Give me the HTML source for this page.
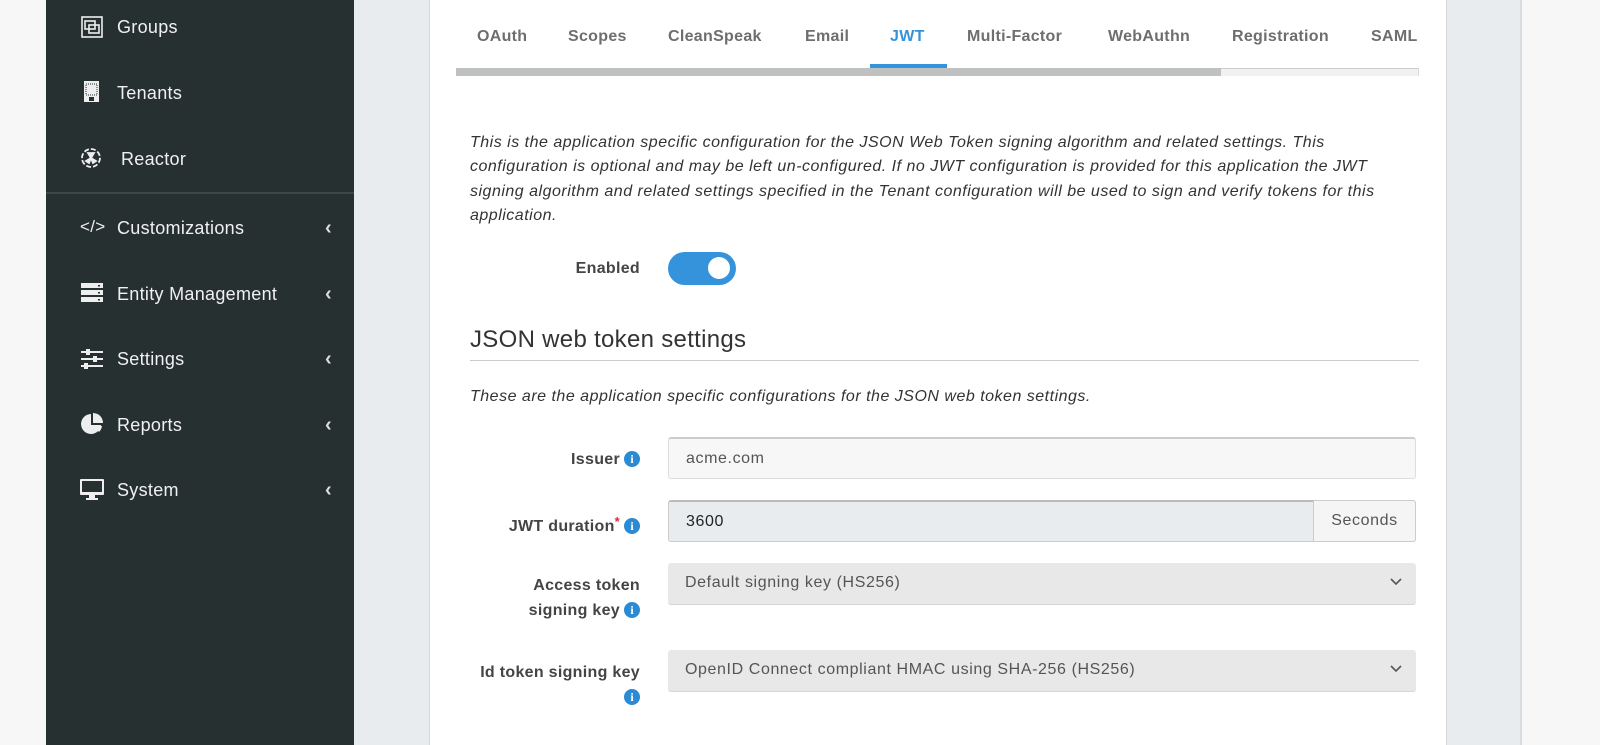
<!DOCTYPE html>
<html><head><style>
*{margin:0;padding:0;box-sizing:border-box}
body{width:1600px;height:745px;overflow:hidden;background:#f7f7f7;font-family:"Liberation Sans",sans-serif;position:relative}
.a{position:absolute}
#side{left:46px;top:0;width:308px;height:745px;background:#263031}
.ni{position:absolute;left:117px;color:#f0f0f0;font-size:18px;letter-spacing:0.3px}
.ic{position:absolute;left:80px;width:24px;height:24px}
.car{position:absolute;left:325px;color:#ddd;font-size:20px;font-weight:bold}
#main{left:354px;top:0;width:1168px;height:745px;background:#e8ecef;border-right:2px solid #d8dde1}
#panel{left:429px;top:0;width:1018px;height:745px;background:#fff;border-left:1px solid #d6dadd;border-right:1px solid #d6dadd}
.tab{position:absolute;top:28px;font-size:16px;font-weight:bold;color:#6e6e6e;letter-spacing:0.3px}
.lbl{position:absolute;font-size:16px;font-weight:bold;color:#444;text-align:right;right:960px;line-height:25px;letter-spacing:0.3px}
.info{display:inline-block;width:16px;height:16px;border-radius:50%;background:#2a8ad4;color:#fff;font-size:12px;font-weight:bold;text-align:center;line-height:16px;font-family:"Liberation Serif",serif;vertical-align:1px;margin-left:4px;letter-spacing:0}
.inp{position:absolute;left:668px;width:748px;height:42px;border-radius:3px;font-size:16px;color:#555;padding-left:17px;line-height:40px;letter-spacing:0.6px}
.chev{position:absolute;right:14px;top:0}
.it{font-size:16px;font-style:italic;color:#333;line-height:24.3px;letter-spacing:0.5px}
</style></head><body>
<div id="side" class="a">
<div class="a" style="left:0;top:192px;width:308px;height:2px;background:#3e4849"></div>
</div>
<svg class="ic" style="top:15px" viewBox="0 0 24 24" fill="none" stroke="#eee" stroke-width="1.6"><rect x="2" y="2" width="20" height="20"/><rect x="5" y="6" width="10" height="8"/><rect x="9" y="10" width="10" height="8"/></svg>
<div class="ni" style="top:17px">Groups</div>
<svg class="ic" style="top:80px" viewBox="0 0 24 24"><rect x="4" y="1" width="15" height="21" fill="#eee"/><g fill="#263031"><rect x="6" y="4" width="11" height="11" fill="none" stroke="#263031" stroke-dasharray="1 1"/><rect x="9" y="17" width="5" height="4"/></g></svg>
<div class="ni" style="top:83px">Tenants</div>
<svg class="ic" style="top:146px" viewBox="0 0 24 24" fill="none" stroke="#eee" stroke-width="1.8"><circle cx="11" cy="12" r="9" stroke-dasharray="5 2"/><path d="M11 12 L8 7 L14 7Z M11 12 L6 15 L9 17Z M11 12 L16 15 L13 17Z" fill="#eee"/></svg>
<div class="ni" style="left:121px;top:149px">Reactor</div>
<div class="ni" style="left:80px;top:217px;font-size:17px">&lt;/&gt;</div>
<div class="ni" style="top:218px">Customizations</div><div class="car" style="top:217px">‹</div>
<svg class="ic" style="top:281px" viewBox="0 0 24 24" fill="#eee"><rect x="1" y="2" width="22" height="5"/><rect x="1" y="9" width="22" height="5"/><rect x="1" y="16" width="22" height="5"/><g fill="#263031"><rect x="18" y="4" width="2" height="1.5"/><rect x="18" y="11" width="2" height="1.5"/><rect x="18" y="18" width="2" height="1.5"/></g></svg>
<div class="ni" style="top:284px">Entity Management</div><div class="car" style="top:283px">‹</div>
<svg class="ic" style="top:347px" viewBox="0 0 24 24" fill="#eee"><rect x="1" y="4" width="22" height="2"/><rect x="1" y="11" width="22" height="2"/><rect x="1" y="18" width="22" height="2"/><rect x="6" y="2" width="4" height="6"/><rect x="13" y="9" width="4" height="6"/><rect x="4" y="16" width="4" height="6"/></svg>
<div class="ni" style="top:349px">Settings</div><div class="car" style="top:348px">‹</div>
<svg class="ic" style="top:412px" viewBox="0 0 24 24" fill="#eee"><path d="M11 2 A10 10 0 1 0 21 13 L11 13Z"/><path d="M13 1 A10 10 0 0 1 23 11 L13 11Z"/><path d="M14 14 L22 14 A10 10 0 0 1 19 20Z"/></svg>
<div class="ni" style="top:415px">Reports</div><div class="car" style="top:414px">‹</div>
<svg class="ic" style="top:478px" viewBox="0 0 24 24" fill="#eee"><rect x="0" y="1" width="24" height="16" rx="1"/><rect x="2" y="3" width="20" height="11" fill="#263031"/><rect x="9" y="17" width="6" height="3"/><rect x="6" y="20" width="12" height="2"/></svg>
<div class="ni" style="top:480px">System</div><div class="car" style="top:479px">‹</div>

<div id="main" class="a"></div>
<div id="panel" class="a"></div>

<div class="tab" style="left:477px">OAuth</div>
<div class="tab" style="left:568px">Scopes</div>
<div class="tab" style="left:668px">CleanSpeak</div>
<div class="tab" style="left:805px">Email</div>
<div class="tab" style="left:890px;color:#3593dc">JWT</div>
<div class="tab" style="left:967px">Multi-Factor</div>
<div class="tab" style="left:1108px">WebAuthn</div>
<div class="tab" style="left:1232px">Registration</div>
<div class="tab" style="left:1371px">SAML</div>
<div class="a" style="left:870px;top:64px;width:77px;height:4px;background:#3593dc"></div>
<div class="a" style="left:456px;top:68px;width:963px;height:8px;background:#f1f1f1;border-top:1px solid #ccc;border-right:1px solid #ddd"></div>
<div class="a" style="left:456px;top:68px;width:765px;height:8px;background:#bfc1c1"></div>

<div class="a it" style="left:470px;top:131px;width:950px">This is the application specific configuration for the JSON Web Token signing algorithm and related settings. This configuration is optional and may be left un-configured. If no JWT configuration is provided for this application the JWT signing algorithm and related settings specified in the Tenant configuration will be used to sign and verify tokens for this application.</div>

<div class="lbl" style="top:256px">Enabled</div>
<div class="a" style="left:668px;top:252px;width:68px;height:33px;border-radius:17px;background:#3593dc"></div>
<div class="a" style="left:708px;top:257px;width:22px;height:22px;border-radius:50%;background:#fff"></div>

<div class="a" style="left:470px;top:326px;font-size:24px;color:#333;letter-spacing:0.3px">JSON web token settings</div>
<div class="a" style="left:470px;top:360px;width:949px;height:1px;background:#ccc"></div>
<div class="a it" style="left:470px;top:385px">These are the application specific configurations for the JSON web token settings.</div>

<div class="lbl" style="top:447px">Issuer<span class="info">i</span></div>
<div class="inp" style="top:437px;background:#f7f7f7;border:1px solid #ddd;border-top:2px solid #ccc">acme.com</div>

<div class="lbl" style="top:509px">JWT duration<span style="color:#e23;font-size:13px;vertical-align:5px">*</span><span class="info">i</span></div>
<div class="inp" style="top:500px;background:#e8ecef;border:1px solid #ccc;border-top:2px solid #bbb;color:#222">3600
<div class="a" style="right:-1px;top:-2px;width:103px;height:42px;background:#f5f5f5;border:1px solid #ccc;border-radius:0 3px 3px 0;color:#555;text-align:center;line-height:40px">Seconds</div></div>

<div class="lbl" style="top:573px">Access token<br>signing key<span class="info">i</span></div>
<div class="inp" style="top:563px;background:#e8e8e8;border-bottom:1px solid #d5d5d5">Default signing key (HS256)<svg class="chev" style="top:15px" width="12" height="8" viewBox="0 0 12 8"><path d="M1 1 L6 6 L11 1" fill="none" stroke="#555" stroke-width="1.6"/></svg></div>

<div class="lbl" style="top:660px">Id token signing key<br><span class="info">i</span></div>
<div class="inp" style="top:650px;background:#e8e8e8;border-bottom:1px solid #d5d5d5">OpenID Connect compliant HMAC using SHA-256 (HS256)<svg class="chev" style="top:15px" width="12" height="8" viewBox="0 0 12 8"><path d="M1 1 L6 6 L11 1" fill="none" stroke="#555" stroke-width="1.6"/></svg></div>
</body></html>
